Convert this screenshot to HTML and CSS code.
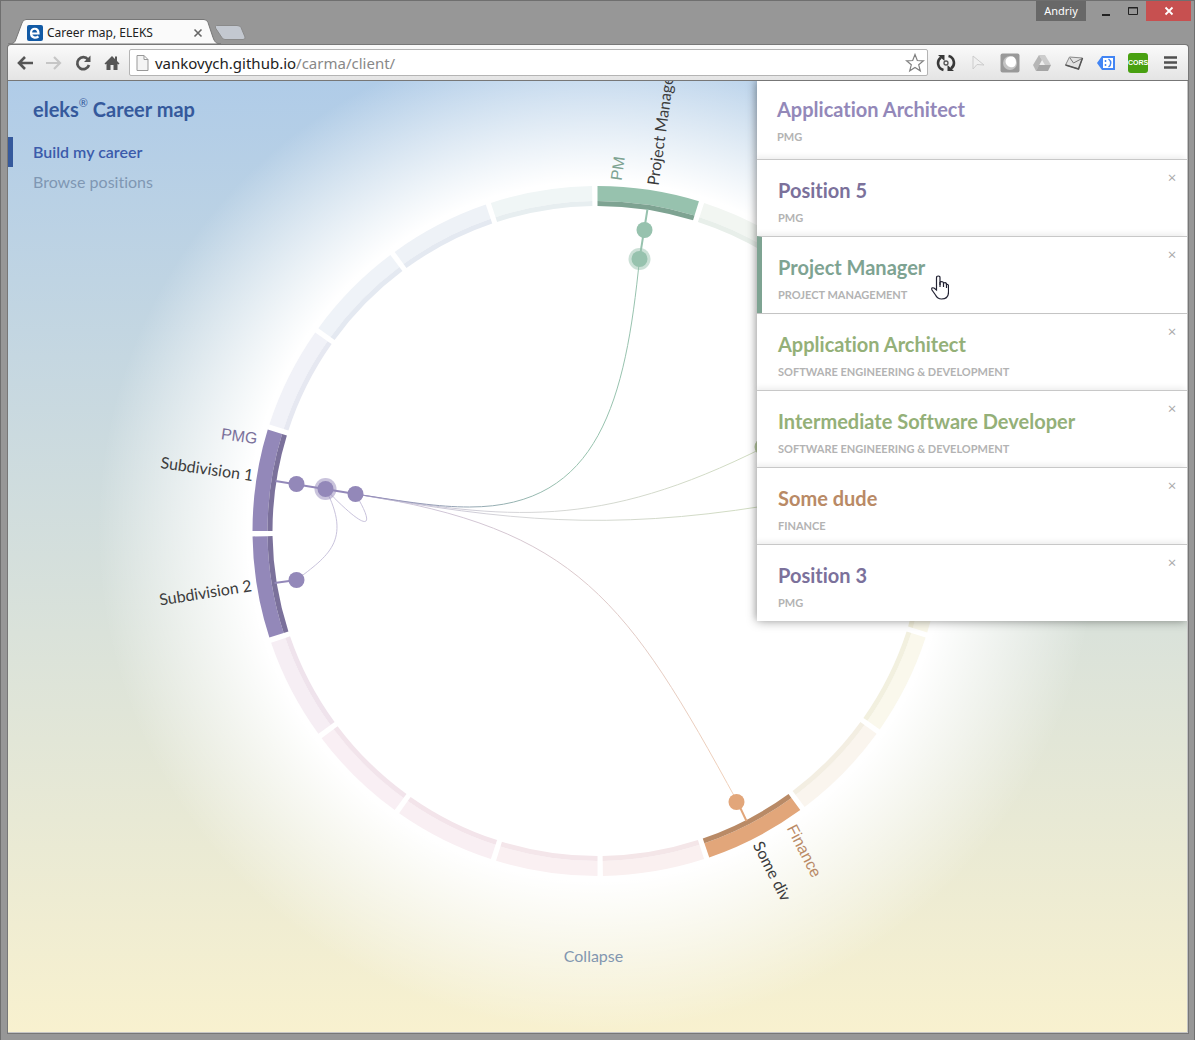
FILE: index.html
```html
<!DOCTYPE html>
<html lang="en">
<head>
<meta charset="utf-8">
<title>Career map, ELEKS</title>
<link rel="stylesheet" href="styles.css">
</head>
<body>
<div class="window">
  <header class="titlebar">
    <div class="tabs">
      <svg class="tab-shape" width="240" height="25" viewBox="0 0 240 25" aria-hidden="true">
        <path class="tab-new" d="M208.500 6.500H229q3 0 4 2L237 18q.5 2.500-2 2.500H217q-2.500 0-3.500-2.500L207.500 9q-.5-2 1-2.500z"/>
        <path class="tab-active" d="M0 25c6 0 7-2 8-5L14 4q1-3.500 4-3.500H196q3 0 4 3l5 15c1.500 4 3 6.500 8 6.500z"/>
      </svg>
      <div class="tab-label">
        <svg width="16" height="16" viewBox="0 0 16 16" aria-hidden="true"><rect width="16" height="16" rx="2" fill="#125aa5"/><path d="M4.500 8.500H11.500C11.500 2 4 2.500 4 8c0 5.500 5 5 7.500 3.500" fill="none" stroke="#fff" stroke-width="2.200"/></svg>
        <span class="tab-title">Career map, ELEKS</span>
        <button class="tab-close" type="button" aria-label="Close tab"><svg width="10" height="10" viewBox="0 0 10 10"><path d="M1.500 1.500l7 7M8.500 1.500l-7 7" stroke="#666" stroke-width="1.600"/></svg></button>
      </div>
    </div>
    <div class="controls">
      <button class="user" type="button">Andriy</button>
      <button class="control" type="button" aria-label="Minimise"><svg width="10" height="10"><path d="M1 9h8" stroke="#222" stroke-width="2"/></svg></button>
      <button class="control" type="button" aria-label="Maximise"><svg width="10" height="10"><path d="M.5 1.500h9v7h-9zM0 2h10" fill="none" stroke="#222"/></svg></button>
      <button class="control close" type="button" aria-label="Close"><svg width="10" height="10"><path d="M1.500 1.500l7 7M8.500 1.500l-7 7" stroke="#fff" stroke-width="1.800"/></svg></button>
    </div>
  </header>
  <nav class="toolbar" aria-label="Browser">
    <div class="nav-buttons">
      <button type="button" aria-label="Back"><svg width="18" height="18" viewBox="0 0 18 18"><path d="M17 9H3M9 3L3 9l6 6" fill="none" stroke="#555" stroke-width="2.600"/></svg></button>
      <button type="button" aria-label="Forward"><svg width="18" height="18" viewBox="0 0 18 18"><path d="M1 9h14M9 3l6 6-6 6" fill="none" stroke="#c6c6c6" stroke-width="2.200"/></svg></button>
      <button type="button" aria-label="Reload"><svg width="18" height="18" viewBox="0 0 18 18"><path d="M14 5.500A6 6 0 1 0 15 11" fill="none" stroke="#555" stroke-width="2.700"/><path d="M16.500 1.500V8H10z" fill="#555"/></svg></button>
      <button type="button" aria-label="Home"><svg width="18" height="18" viewBox="0 0 18 18"><path d="M9 2l3 3V2.500h2v4.500L16.500 9.500l-1 1-1-.8V16h-4v-5H7.500v5h-4V9.700l-1 .8-1-1z" fill="#555"/></svg></button>
    </div>
    <div class="address">
      <svg width="13" height="16" viewBox="0 0 13 16" aria-hidden="true"><path d="M1 .5h7l4 4v11H1zM8 .5v4h4" fill="#f4f4f4" stroke="#999"/></svg>
      <span class="url"><span class="host">vankovych.github.io</span>/carma/client/</span>
      <svg width="20" height="20" viewBox="0 0 20 20" aria-hidden="true"><path d="M10 1.500l2.300 6 6.200.3-4.800 4 1.600 6-5.300-3.400-5.300 3.400 1.600-6-4.800-4 6.200-.3z" fill="#fff" stroke="#808080" stroke-width="1.200"/></svg>
    </div>
    <div class="extensions">
      <svg width="20" height="20" viewBox="0 0 20 20"><path d="M7.500 17A7 7 0 0 1 5 4.500M12.500 3A7 7 0 0 1 15 15.500" fill="none" stroke="#383838" stroke-width="2.600"/><path d="M2 2h6.500v6zM18 18h-6.500v-6z" fill="#383838"/><circle cx="10" cy="10" r="2" fill="none" stroke="#555" stroke-width="1.300"/></svg>
      <svg width="20" height="20" viewBox="0 0 20 20"><path d="M5 3v13l4-4.500 7 .5z" fill="#f0f0f0" stroke="#ccc"/></svg>
      <svg width="20" height="20" viewBox="0 0 20 20"><rect x=".5" y=".5" width="19" height="19" rx="2" fill="#999"/><circle cx="10" cy="10" r="7" fill="#c4c4c4"/><path d="M7 5c5-3 9-1 9 4s-4 6-6 5c-4-1-6-6-3-9z" fill="#fff"/></svg>
      <svg width="20" height="20" viewBox="0 0 20 20"><path d="M7 2h6l6 10h-6z" fill="#ccc"/><path d="M7 2l3 5-6 11-3-6z" fill="#b6b6b6"/><path d="M7 12h12l-3 6H4z" fill="#a5a5a5"/></svg>
      <svg width="20" height="20" viewBox="0 0 20 20"><path d="M5.500 4l13 1-4 11-13-4z" fill="#e2e2e2" stroke="#888"/><path d="M18.500 5l-4 11-13-4" fill="none" stroke="#555" stroke-width="1.500"/><path d="M6 5l3.500 5L18 5.500" fill="none" stroke="#777"/></svg>
      <svg width="20" height="20" viewBox="0 0 20 20"><path d="M6 3h13v14H6l-5-7z" fill="#4285f4"/><rect x="7" y="5" width="10" height="10" fill="#fff"/><path d="M9.500 7v2M9.500 11v2M12.500 6c3 2 3 6 0 8" stroke="#4285f4" stroke-width="1.500" fill="none"/></svg>
      <span class="cors">CORS</span>
      <svg width="20" height="20" viewBox="0 0 20 20"><path d="M4 4.500h13M4 9.500h13M4 14.500h13" stroke="#505050" stroke-width="2.600"/></svg>
    </div>
  </nav>

  <main class="page">
    <svg class="chart" viewBox="0 0 1180 951" preserveAspectRatio="xMidYMin slice" role="img" aria-label="Career map">
      <defs>
        <linearGradient id="to-green" gradientUnits="userSpaceOnUse" x1="348" y1="413" x2="560" y2="400"><stop stop-color="#9388b9"/><stop offset="1" stop-color="#97c2ae"/></linearGradient>
        <linearGradient id="to-olive" gradientUnits="userSpaceOnUse" x1="348" y1="413" x2="757" y2="413"><stop stop-color="#bfb8d6"/><stop offset=".4" stop-color="#d6d6d8"/><stop offset="1" stop-color="#d0dcc0"/></linearGradient>
        <linearGradient id="to-orange" gradientUnits="userSpaceOnUse" x1="348" y1="413" x2="730" y2="721"><stop stop-color="#c9c3dc"/><stop offset="1" stop-color="#f1d0b8"/></linearGradient>
      </defs>
      <g id="ring" transform="translate(590 450)"></g>
      <g class="links">
        <path class="link" stroke="url(#to-orange)" d="M348 413C570 447 620 520 730 721"/>
        <path class="link" stroke="url(#to-olive)" d="M348 413C500 438 590 450 757 366"/>
        <path class="link" stroke="url(#to-olive)" d="M348 413C500 440 600 450 757 425"/>
        <path class="link" stroke="url(#to-green)" d="M348 413C400 421 430 426 462 426C592 426 618 318 632 178"/>
        <path class="link violet" d="M318 408C363 455 368 446 348 413"/>
        <path class="link violet" d="M318 408C345 460 320 475 289 499"/>
      </g>
      <g class="spokes purple"><path d="M268 400L348 413M267 502L289 499"/></g>
      <g class="spokes green"><path d="M640 128L632 178"/></g>
      <g class="spokes orange"><path d="M739 740L730 721"/></g>
      <g class="nodes purple"><circle class="halo" cx="318" cy="408" r="11"/><circle cx="289" cy="403" r="8"/><circle cx="318" cy="408" r="8"/><circle cx="348" cy="413" r="8"/><circle cx="289" cy="499" r="8"/></g>
      <g class="nodes green"><circle class="halo" cx="632" cy="178" r="11"/><circle cx="637" cy="149" r="8"/><circle cx="632" cy="178" r="8"/></g>
      <g class="nodes orange"><circle cx="729" cy="721" r="8"/></g>
      <g class="nodes olive"><circle cx="755" cy="366" r="8"/></g>
      <g class="labels">
        <text class="division purple" text-anchor="end" transform="translate(249 363) rotate(8)">PMG</text>
        <text text-anchor="end" transform="translate(245 400) rotate(8)">Subdivision 1</text>
        <text text-anchor="end" transform="translate(245 510) rotate(-9)">Subdivision 2</text>
        <text class="division green" transform="translate(614 100) rotate(-82)">PM</text>
        <text transform="translate(651 105) rotate(-82)">Project Manager</text>
        <text class="division orange" transform="translate(779 747) rotate(63)">Finance</text>
        <text transform="translate(745 764) rotate(63)">Some div</text>
      </g>
    </svg>
    <aside class="sidebar">
      <h1>eleks<sup>®</sup> Career map</h1>
      <nav class="menu">
        <a class="active" href="#build">Build my career</a>
        <a href="#browse">Browse positions</a>
      </nav>
    </aside>
    <button class="collapse" type="button">Collapse</button>
    <section class="positions" aria-label="Positions">
      <article class="card first"><h2 class="violet">Application Architect</h2><p>PMG</p></article>
      <article class="card"><h2 class="purple">Position 5</h2><p>PMG</p><button type="button" aria-label="Remove">×</button></article>
      <article class="card selected"><h2 class="green">Project Manager</h2><p>PROJECT MANAGEMENT</p><button type="button" aria-label="Remove">×</button>
        <svg class="cursor" width="18" height="25" viewBox="0 0 18 25" aria-hidden="true"><path d="M5.500 15V3q0-2 1.800-2T9 3v7-3q3-1 3.500 1 3-1 3 1.500 2-.5 2 1.500v6q0 7-7 7-4 0-6-4L1 15q-1-3 2-2z" fill="#fff" stroke="#223" stroke-width="1.200"/><path d="M9 7v5M12.500 8v4M15.500 9v4" stroke="#223" stroke-width="1.200"/></svg>
      </article>
      <article class="card"><h2 class="olive">Application Architect</h2><p>SOFTWARE ENGINEERING &amp; DEVELOPMENT</p><button type="button" aria-label="Remove">×</button></article>
      <article class="card"><h2 class="olive">Intermediate Software Developer</h2><p>SOFTWARE ENGINEERING &amp; DEVELOPMENT</p><button type="button" aria-label="Remove">×</button></article>
      <article class="card"><h2 class="orange">Some dude</h2><p>FINANCE</p><button type="button" aria-label="Remove">×</button></article>
      <article class="card"><h2 class="purple">Position 3</h2><p>PMG</p><button type="button" aria-label="Remove">×</button></article>
    </section>
  </main>
</div>
<script src="ring.js"></script>
</body>
</html>
```
FILE: ring.js
```js
// Twenty divisions of 18 degrees, each an outer band with a darker inner rim.
const divisions = [
  ['#97c2ae', '#7ea392'], ['#f2f6f2', '#e8efea'], ['#f2f6f2', '#e8efea'], ['#f4f6ee', '#ebefe2'],
  ['#f4f6ee', '#ebefe2'], ['#faf8ea', '#f3f0dc'], ['#faf8ec', '#f2f0df'], ['#faf5ee', '#f3eee2'],
  ['#e2a67a', '#b98a66'], ['#faf0f0', '#f4e6e8'], ['#faf0f2', '#f4e6ea'], ['#f9eff3', '#f3e4ea'],
  ['#f9eff4', '#f2e4eb'], ['#f6eef4', '#efe3ec'], ['#9388b9', '#7b719b'], ['#9388b9', '#7b719b'],
  ['#f1f2f8', '#e6e8f1'], ['#eff3f8', '#e4e9f1'], ['#eef2f7', '#e4e9f1'], ['#f0f6f6', '#e7eef0']
];
const point = (r, deg) => {
  const a = deg * Math.PI / 180;
  return `${(r * Math.sin(a)).toFixed(2)} ${(-r * Math.cos(a)).toFixed(2)}`;
};
const band = (inner, outer, from, to) =>
  `M${point(outer, from)}A${outer} ${outer} 0 0 1 ${point(outer, to)}L${point(inner, to)}A${inner} ${inner} 0 0 0 ${point(inner, from)}Z`;
const ring = document.getElementById('ring');
divisions.forEach(([fill, rim], i) => {
  [[330, 345, fill], [325, 330, rim]].forEach(([inner, outer, color]) => {
    const path = document.createElementNS('http://www.w3.org/2000/svg', 'path');
    path.setAttribute('d', band(inner, outer, i * 18, i * 18 + 17.1));
    path.setAttribute('fill', color);
    ring.append(path);
  });
});
```
FILE: styles.css
```css
* { box-sizing: border-box; }
body { margin: 0; background: #979797; font-family: Lato, "Open Sans", sans-serif; font-variant-ligatures: none; }
button { border: 0; padding: 0; background: none; font: inherit; color: inherit; }
h1, h2, p { margin: 0; }

.window { display: flex; flex-direction: column; min-height: 100vh; padding: 0 6px 7px 7px; border: 1px solid #6f6f6f; background: #979797; }
.titlebar { display: flex; justify-content: space-between; height: 43px; }
.tabs { display: grid; align-items: end; }
.tabs > * { grid-area: 1 / 1; }
.tab-shape { display: block; z-index: 1; }
.tab-active { fill: #fafafa; stroke: #777; }
.tab-new { fill: #c3c8d0; stroke: #8a8a8a; }
.tab-label { z-index: 2; display: flex; align-items: center; gap: 4px; height: 22px; width: 195px; padding-left: 19px; font: 12px/16px "Noto Sans", sans-serif; color: #222; }
.tab-title { flex: 1; }
.tab-close { display: flex; }
.controls { display: flex; align-items: flex-start; margin-right: -3px; }
.controls button { height: 20px; }
.user { width: 50px; background: #686868; color: #fff; font: 11px/20px "Noto Sans", sans-serif; }
.control { width: 27px; display: grid; place-items: center; }
.user + .control { margin-left: 6px; }
.controls .close { width: 45px; background: #c75050; }

.toolbar { display: flex; align-items: center; gap: 8px; height: 37px; padding: 0 8px; border: 1px solid #777; border-bottom-color: #aaa; border-radius: 4px 4px 0 0; background: linear-gradient(#fafafa, #e4e4e4); margin: 0 -1px; }
.nav-buttons { display: flex; gap: 11px; }
.nav-buttons button { display: flex; }
.address { flex: 1; display: flex; align-items: center; gap: 6px; height: 27px; padding: 0 2px 0 6px; border: 1px solid #b4b4b4; border-radius: 2px; background: #fff; }
.url { flex: 1; font: 15px/20px "Noto Sans", sans-serif; color: #888; }
.host { color: #222; }
.extensions { display: flex; align-items: center; gap: 12px; }
.cors { width: 20px; height: 20px; border-radius: 3px; background: #48a010; color: #fff; font: bold 7px/20px "Liberation Sans", sans-serif; text-align: center; }

.page { flex: 1; display: grid; grid-template-columns: 1fr 430px; grid-template-rows: auto 1fr; overflow: hidden; border: solid #c4c4c4; border-width: 0 1px 1px 0; box-shadow: 0 0 0 1px #777; background: radial-gradient(circle at 50% 450px, #fff 350px, #fff0 500px), linear-gradient(#b0cce8, #dae2da 58%, #f8f1cf); }
.chart { grid-area: 1 / 1 / 3 / 3; width: 100%; height: 951px; display: block; }
.sidebar { grid-area: 1 / 1; padding-top: 15px; align-self: start; justify-self: start; }
h1 { padding-left: 25px; font-size: 20px; line-height: 26px; font-weight: 700; color: #35599c; }
sup { font-size: 11px; line-height: 0; vertical-align: 10px; font-weight: 400; }
.menu { display: flex; flex-direction: column; margin-top: 15px; }
.menu a { height: 30px; padding-left: 25px; font-size: 16px; line-height: 30px; color: #7f97b3; text-decoration: none; }
.menu .active { border-left: 5px solid #35599c; padding-left: 20px; font-weight: 600; color: #3b5bab; }
.collapse { grid-area: 2 / 1 / 3 / 3; align-self: end; justify-self: center; margin: 0 8px 64px 0; font-size: 16px; line-height: 24px; color: #8296b0; }

.positions { grid-area: 1 / 2; align-self: start; box-shadow: 0 0 10px #0006; z-index: 1; }
.card { display: grid; grid-template-columns: 1fr auto; height: 77px; padding: 17px 8px 0 21px; background: #fff; border-top: 1px solid #c8c8c8; box-shadow: -2px -2px 6px #00000014; align-content: start; }
.card.first { height: 78px; padding: 15px 8px 0 20px; border-top: 0; }
.card h2 { font-size: 20px; line-height: 26px; font-weight: 700; }
.card p { grid-area: 2 / 1; margin-top: 7px; font-size: 11px; line-height: 16px; font-weight: 700; color: #b3b3b3; }
.card button { grid-area: 1 / 2; align-self: start; width: 14px; font: 15px/20px "Open Sans", sans-serif; margin-top: -10px; color: #aaa; }
.selected { position: relative; border-left: 5px solid #7ea392; padding-left: 16px; }
.cursor { position: absolute; left: 169px; top: 38px; }
h2.violet { color: #9388b9; }
h2.purple { color: #7b719b; }
h2.green { color: #7ea392; }
h2.olive { color: #94b078; }
h2.orange { color: #b98a66; }

.link { fill: none; }
.link.violet { stroke: #c9c3dc; }
.spokes { stroke-width: 2; }
.spokes.purple { stroke: #9388b9; }
.spokes.green { stroke: #97c2ae; }
.spokes.orange { stroke: #e2a67a; }
.nodes.purple { fill: #9388b9; }
.nodes.green { fill: #97c2ae; }
.nodes.orange { fill: #e2a67a; }
.nodes.olive { fill: #b9cba2; }
.halo { opacity: .5; }
.labels { font-size: 16px; fill: #3c3c3c; }
.division { font-family: "Liberation Sans", Arial, sans-serif; }
.division.purple { fill: #7b719b; }
.division.green { fill: #7ea392; }
.division.orange { fill: #b98a66; }
```
